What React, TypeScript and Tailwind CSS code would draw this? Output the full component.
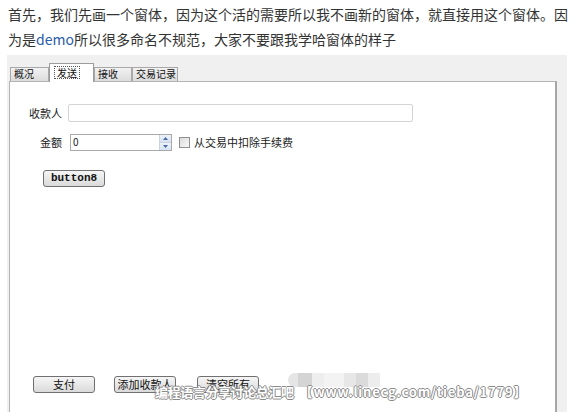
import React from 'react';

const cjk = 'font-["Noto_Sans_CJK_SC","Noto_Sans",sans-serif]';

const tabs = [
  { label: '概况', w: 'w-[39px]' },
  { label: '发送', w: 'w-[45px]', active: true },
  { label: '接收', w: 'w-[38px]' },
  { label: '交易记录', w: 'w-[46px]' },
];

const WinButton: React.FC<{ children: React.ReactNode; className?: string }> = ({ children, className = '' }) => (
  <div
    className={`w-[62px] h-[17px] flex items-center justify-center border border-[#707070] rounded-[3px] bg-gradient-to-b from-[#f6f6f6] to-[#dadada] text-[11px] leading-none text-[#111] ${className}`}
  >
    {children}
  </div>
);

const App: React.FC = () => {
  return (
    <div className={`w-[581px] h-[412px] bg-white overflow-hidden relative ${cjk}`}>
      {/* Intro text */}
      <div className="pl-[8px] pt-[2px] text-[14px] leading-[25px] text-[#333] whitespace-nowrap">
        <div>首先，我们先画一个窗体，因为这个活的需要所以我不画新的窗体，就直接用这个窗体。因</div>
        <div className="flex">
          <span>为是</span>
          <span className="text-[#2a5caa]">demo</span>
          <span>所以很多命名不规范，大家不要跟我学哈窗体的样子</span>
        </div>
      </div>

      {/* Form screenshot */}
      <div className="mt-[3px] ml-[7px] w-[560px] h-[357px] bg-[#f0f0f0] overflow-hidden flex flex-col">
        <div className="flex items-end pl-[3px] pt-[8px] h-[26px]">
          {tabs.map((t) =>
            t.active ? (
              <div
                key={t.label}
                className={`${t.w} h-[19px] -mb-px relative z-10 bg-white border border-b-0 border-[#9c9c9c] flex items-start pl-[4px] pt-[2px]`}
              >
                <span className="border border-dotted border-[#555] px-[2px] text-[10px] leading-[11px] text-[#111]">
                  {t.label}
                </span>
              </div>
            ) : (
              <div
                key={t.label}
                className={`${t.w} h-[14px] border border-b-0 border-[#a8a8a8] bg-gradient-to-b from-[#f2f2f2] to-[#dcdcdc] text-[10px] leading-[12px] pl-[3px] text-[#111] whitespace-nowrap overflow-hidden`}
              >
                {t.label}
              </div>
            )
          )}
        </div>

        <div className="ml-[2px] w-[548px] h-[340px] bg-white border-l border-t border-[#b4b4b4] border-r-2 border-r-[#a6a6a6] text-[11px] text-[#222]">
          {/* 收款人 */}
          <div className="flex items-center mt-[22px]">
            <span className="w-[52px] text-right">收款人</span>
            <div className="ml-[6px] w-[345px] h-[18px] border border-[#d4d4d4] rounded-[2px]" />
          </div>

          {/* 金额 */}
          <div className="flex items-center mt-[12px]">
            <span className="w-[52px] text-right">金额</span>
            <div className="ml-[8px] w-[102px] h-[17px] border border-[#a9a9a9] flex">
              <span className="flex-1 pl-[2px] text-[10px] leading-[14px]">0</span>
              <div className="w-[12px] flex flex-col border-l border-[#c8d4e4]">
                <div className="flex-1 bg-gradient-to-b from-[#eef3fa] to-[#d6e2f2] flex items-center justify-center border-b border-[#c8d4e4]">
                  <svg width="5" height="3" viewBox="0 0 5 3"><path d="M0 3 L2.5 0 L5 3Z" fill="#4a6aa0" /></svg>
                </div>
                <div className="flex-1 bg-gradient-to-b from-[#eef3fa] to-[#d6e2f2] flex items-center justify-center">
                  <svg width="5" height="3" viewBox="0 0 5 3"><path d="M0 0 L5 0 L2.5 3Z" fill="#4a6aa0" /></svg>
                </div>
              </div>
            </div>
            <div className="ml-[7px] w-[11px] h-[11px] border border-[#8f8f8f] bg-gradient-to-br from-[#dcdcdc] to-[#f8f8f8]" />
            <span className="ml-[4px]">从交易中扣除手续费</span>
          </div>

          {/* button8 */}
          <div className="mt-[19px] ml-[33px]">
            <WinButton className='font-["Liberation_Mono",monospace] font-semibold text-[10px]'>button8</WinButton>
          </div>

          {/* Bottom buttons */}
          <div className="flex mt-[189px] ml-[23px]">
            <WinButton>支付</WinButton>
            <WinButton className="ml-[19px]">添加收款人</WinButton>
            <WinButton className="ml-[21px]">清空所有</WinButton>
          </div>
        </div>
      </div>

      {/* Watermark overlay */}
      <div className="absolute left-[288px] top-[373px] flex opacity-60">
        <div className="w-[10px] h-[14px] bg-[#d4d4d4] rounded-l-full" />
        <div className="w-[14px] h-[14px] bg-[#b8b8b8]" />
        <div className="w-[12px] h-[14px] bg-[#e4e4e4]" />
        <div className="w-[20px] h-[14px] bg-[#ececec]" />
        <div className="w-[12px] h-[14px] bg-[#d8d8d8]" />
        <div className="w-[12px] h-[14px] bg-[#c4c4c4]" />
        <div className="w-[12px] h-[14px] bg-[#e2e2e2]" />
      </div>
      <div className="absolute left-[155px] top-[384px] flex items-center text-white font-bold text-[13px] leading-[16px] [text-shadow:1px_0_0_#8a8a8a,-1px_0_0_#8a8a8a,0_1px_0_#8a8a8a,0_-1px_0_#8a8a8a]">
        <span className="tracking-[-0.4px]">编程语言分享讨论总汇吧</span>
        <span className="ml-[6px] tracking-[0.8px]">【www.linecg.com/tieba/1779】</span>
      </div>
    </div>
  );
};

export default App;
